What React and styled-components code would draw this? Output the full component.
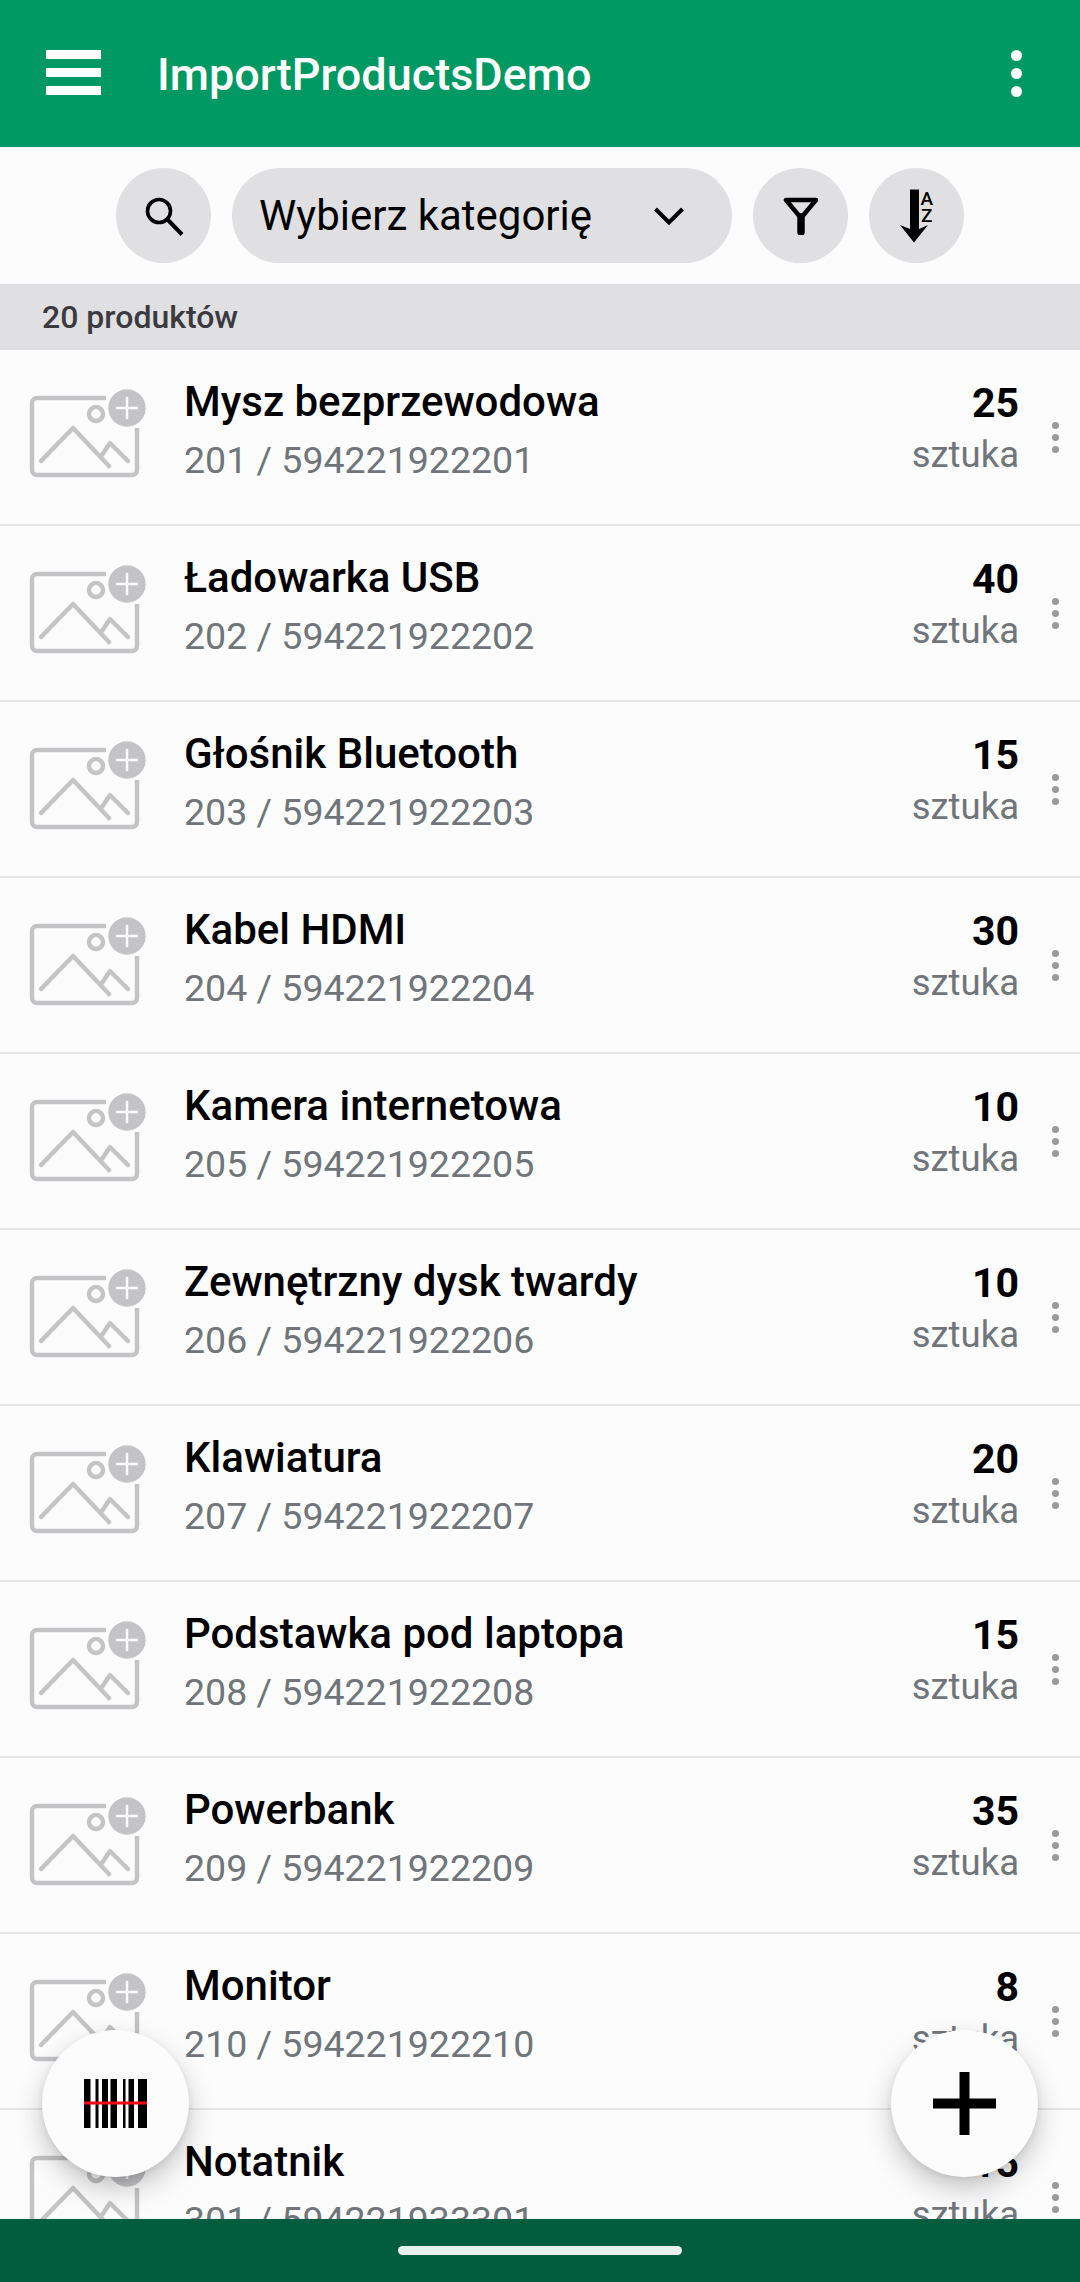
import React from "react";
import styled, { createGlobalStyle } from "styled-components";

const products = [
  { name: "Mysz bezprzewodowa", code: "201 / 594221922201", qty: 25 },
  { name: "Ładowarka USB", code: "202 / 594221922202", qty: 40 },
  { name: "Głośnik Bluetooth", code: "203 / 594221922203", qty: 15 },
  { name: "Kabel HDMI", code: "204 / 594221922204", qty: 30 },
  { name: "Kamera internetowa", code: "205 / 594221922205", qty: 10 },
  { name: "Zewnętrzny dysk twardy", code: "206 / 594221922206", qty: 10 },
  { name: "Klawiatura", code: "207 / 594221922207", qty: 20 },
  { name: "Podstawka pod laptopa", code: "208 / 594221922208", qty: 15 },
  { name: "Powerbank", code: "209 / 594221922209", qty: 35 },
  { name: "Monitor", code: "210 / 594221922210", qty: 8 },
  { name: "Notatnik", code: "301 / 594221933301", qty: 15 },
];

const PhotoIcon = () => (
  <svg width="120" height="92" viewBox="0 0 120 92" fill="none">
    <path d="M78 11H9a5 5 0 0 0-5 5V83a5 5 0 0 0 5 5H104a5 5 0 0 0 5-5V41" stroke="#c4c4c6" strokeWidth="4.5" />
    <circle cx="68" cy="27" r="7" stroke="#c4c4c6" strokeWidth="4.5" />
    <path d="M13 74L45 41L81 79M74 68L82 56L100 74" stroke="#c4c4c6" strokeWidth="4.5" strokeLinecap="round" strokeLinejoin="round" />
    <circle cx="99" cy="21" r="18.7" fill="#c4c4c6" />
    <path d="M99 10V32M88 21H110" stroke="#fcfcfd" strokeWidth="2.5" />
  </svg>
);

const BarcodeIcon = () => (
  <svg width="63" height="49" viewBox="0 0 63 49">
    <path
      fill="#000"
      d="M0 0h6.5v49H0zM11.5 0h3v49h-3zM18 0h6v49h-6zM26.5 0h6.5v49h-6.5zM39 0h2.5v49H39zM44.5 0h5.5v49h-5.5zM54 0h9v49h-9z"
    />
    <rect y="22.5" width="63" height="3" fill="#f00a14" />
  </svg>
);

const App = () => {
  return (
    <Screen>
      <GlobalStyle />
      <AppBar>
        <Burger>
          <span />
          <span />
          <span />
        </Burger>
        <AppTitle>ImportProductsDemo</AppTitle>
        <AppMenu>
          <i />
          <i />
          <i />
        </AppMenu>
      </AppBar>
      <Toolbar>
        <RoundButton>
          <svg width="40" height="40" viewBox="0 0 40 40" fill="none">
            <circle cx="15" cy="15" r="11.5" stroke="#000" strokeWidth="3.6" />
            <path d="M23.5 23.5L38 38.5" stroke="#000" strokeWidth="4" />
          </svg>
        </RoundButton>
        <CategorySelect>
          <span>Wybierz kategorię</span>
          <svg width="32" height="20" viewBox="0 0 32 20" fill="none">
            <path d="M2.5 3L16 16.5L29.5 3" stroke="#000" strokeWidth="4" />
          </svg>
        </CategorySelect>
        <RoundButton>
          <svg width="36" height="38" viewBox="0 0 36 38" fill="none">
            <path d="M3 3H33L18 21Z" stroke="#000" strokeWidth="4.5" strokeLinejoin="round" />
            <path d="M18 20V35" stroke="#000" strokeWidth="7.5" strokeLinecap="round" />
          </svg>
        </RoundButton>
        <RoundButton>
          <svg width="40" height="56" viewBox="0 0 40 56">
            <path d="M13 1.5h9V41l9-4L17 54.5L3 37l10 4z" fill="#000" />
            <SortLetter x="23.5" y="16.5">A</SortLetter>
            <SortLetter x="24" y="33.5">Z</SortLetter>
          </svg>
        </RoundButton>
      </Toolbar>
      <CountBar>20 produktów</CountBar>
      <List>
        {products.map((p) => (
          <Row key={p.code}>
            <PhotoIcon />
            <Info>
              <Name>{p.name}</Name>
              <Code>{p.code}</Code>
            </Info>
            <Stock>
              <Qty>{p.qty}</Qty>
              <Unit>sztuka</Unit>
            </Stock>
            <RowMenu>
              <i />
              <i />
              <i />
            </RowMenu>
          </Row>
        ))}
      </List>
      <NavBar>
        <NavPill />
      </NavBar>
      <Fab $side="left">
        <BarcodeIcon />
      </Fab>
      <Fab $side="right">
        <svg width="63" height="63" viewBox="0 0 63 63">
          <path d="M26.5 0h10v26.5H63v10H36.5V63h-10V36.5H0v-10h26.5z" fill="#000" />
        </svg>
      </Fab>
    </Screen>
  );
};

export default App;

const GlobalStyle = createGlobalStyle`
  html, body {
    margin: 0;
    padding: 0;
    background: #fcfcfd;
  }
  * {
    box-sizing: border-box;
  }
`;

const Screen = styled.div`
  position: relative;
  width: 1080px;
  height: 2282px;
  display: flex;
  flex-direction: column;
  overflow: hidden;
  background: #fcfcfd;
  font-family: Roboto, "Noto Sans", sans-serif;
`;

const AppBar = styled.header`
  height: 147px;
  flex: none;
  display: flex;
  align-items: flex-start;
  padding: 50px 0 0 46px;
  background: #019963;
  color: #fff;
`;

const Burger = styled.div`
  width: 55px;
  height: 45px;
  display: flex;
  flex-direction: column;
  justify-content: space-between;

  span {
    display: block;
    height: 9px;
    background: #fff;
  }
`;

const AppTitle = styled.div`
  margin: -3px 0 0 56px;
  font-size: 45px;
  line-height: 56px;
  font-weight: 500;
`;

const AppMenu = styled.div`
  margin-left: auto;
  margin-right: 58px;
  display: flex;
  flex-direction: column;
  gap: 7px;

  i {
    display: block;
    width: 11px;
    height: 11px;
    border-radius: 50%;
    background: #fff;
  }
`;

const Toolbar = styled.div`
  height: 137px;
  flex: none;
  display: flex;
  align-items: center;
  justify-content: center;
  gap: 21px;
`;

const RoundButton = styled.div`
  width: 95px;
  height: 95px;
  border-radius: 50%;
  background: #e0e0e2;
  display: flex;
  align-items: center;
  justify-content: center;
`;

const CategorySelect = styled.div`
  width: 500px;
  height: 95px;
  border-radius: 48px;
  background: #e0e0e2;
  display: flex;
  align-items: center;
  justify-content: space-between;
  padding: 0 47px 0 27px;
  font-size: 42px;
  color: #000;
`;

const SortLetter = styled.text`
  font-family: Roboto, sans-serif;
  font-size: 19px;
  font-weight: 500;
  fill: #000;
`;

const CountBar = styled.div`
  height: 66px;
  flex: none;
  display: flex;
  align-items: center;
  padding-left: 42px;
  background: #e0e0e2;
  color: #3a3a40;
  font-size: 32px;
  font-weight: 500;
`;

const List = styled.div`
  flex: 1;
  min-height: 0;
  overflow: hidden;
`;

const Row = styled.div`
  height: 176px;
  display: flex;
  align-items: flex-start;
  padding: 37px 0 0 28px;
  border-bottom: 2px solid #e6e6e8;
`;

const Info = styled.div`
  margin: -12px 0 0 36px;
  flex: 1;
  min-width: 0;
`;

const Name = styled.div`
  font-size: 42px;
  line-height: 54px;
  font-weight: 500;
  color: #000;
`;

const Code = styled.div`
  margin-top: 7px;
  font-size: 37.5px;
  line-height: 48px;
  color: #70757a;
`;

const Stock = styled.div`
  margin-top: -11px;
  text-align: right;
`;

const Qty = styled.div`
  font-size: 41px;
  line-height: 54px;
  font-weight: 700;
  color: #000;
`;

const Unit = styled.div`
  margin-top: 3px;
  font-size: 36.5px;
  line-height: 44px;
  color: #70757a;
`;

const RowMenu = styled.div`
  width: 61px;
  margin-top: 35px;
  padding-left: 11px;
  display: flex;
  flex-direction: column;
  align-items: center;
  gap: 5px;

  i {
    display: block;
    width: 7px;
    height: 7px;
    border-radius: 50%;
    background: #9b9b9f;
  }
`;

const NavBar = styled.div`
  height: 63px;
  flex: none;
  display: flex;
  align-items: center;
  justify-content: center;
  background: #025c3e;
`;

const NavPill = styled.div`
  width: 284px;
  height: 9px;
  border-radius: 5px;
  background: #e9f1ee;
`;

const Fab = styled.div`
  position: absolute;
  top: 2030px;
  ${(p) => (p.$side === "left" ? "left: 42px;" : "right: 42px;")}
  width: 147px;
  height: 147px;
  border-radius: 50%;
  background: #fcfcfd;
  box-shadow: 0 12px 28px rgba(0, 0, 0, 0.22), 0 2px 6px rgba(0, 0, 0, 0.08);
  display: flex;
  align-items: center;
  justify-content: center;
`;
